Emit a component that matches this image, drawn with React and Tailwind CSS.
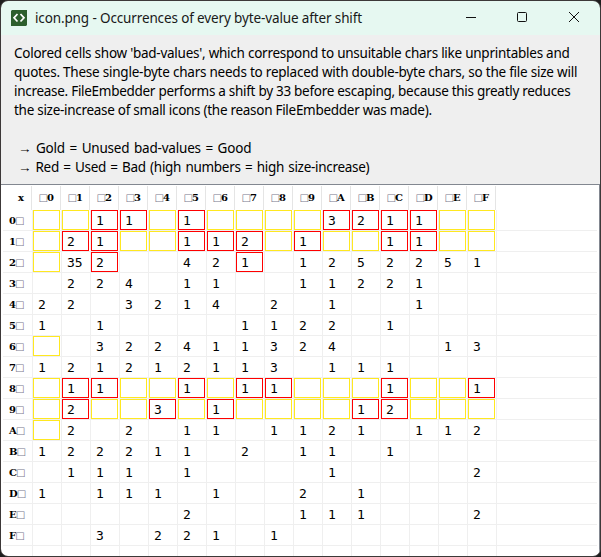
import React from "react";

const HEX = "0123456789ABCDEF".split("");

// One string per high nibble, one entry per low nibble; "." is an unused value.
const COUNTS = [
  ". . 1 1 . 1 . . . . 3 2 1 1 . .",
  ". 2 1 . . 1 1 2 . 1 . . 1 1 . .",
  ". 35 2 . . 4 2 1 . 1 2 5 2 2 5 1",
  ". 2 2 4 . 1 1 . . 1 1 2 2 1 . .",
  "2 2 . 3 2 1 4 . 2 . 1 . . 1 . .",
  "1 . 1 . . . . 1 1 2 2 . 1 . . .",
  ". . 3 2 2 4 1 1 3 2 4 . . . 1 3",
  "1 2 1 2 1 2 1 1 3 . 1 1 1 . . .",
  ". 1 1 . . 1 . 1 1 . . . 1 . . 1",
  ". 2 . . 3 . 1 . . . . 1 2 . . .",
  ". 2 . 2 . 1 1 . 1 1 2 1 . 1 1 2",
  "1 2 2 2 1 1 . 2 . 1 1 . 1 . . .",
  ". 1 1 1 . 1 . . . . 1 . . . . 2",
  "1 . 1 1 1 . 1 . . 2 . 1 . . . .",
  ". . . . . 2 . . . 1 1 1 . . . 2",
  ". . 3 . 2 2 1 . 1 . . . . . . .",
].map((row) => row.split(" ").map((v) => (v === "." ? "" : v)));

const isBad = (v) =>
  v <= 0x20 || v === 0x22 || v === 0x27 || v === 0x60 || (v >= 0x80 && v <= 0xa0);

function Box() {
  return (
    <span className="inline-flex w-2 justify-center font-['DejaVu_Sans'] text-[10px] font-normal text-[#77778c]">
      □
    </span>
  );
}

function TitleBar() {
  return (
    <header className="flex h-[34px] shrink-0 items-center bg-[#e6f8f1] pl-[10px]">
      <svg width="16" height="16" viewBox="0 0 16 16" className="mb-px shrink-0">
        <path d="M1 0H16V15L15 16H0V1Z" fill="#2d5f2d" />
        <path d="M6.5 4L3 7.8L6.5 11.5M9.5 4L13 7.8L9.5 11.5" fill="none" stroke="#fff" strokeWidth="1.7" />
      </svg>
      <h1 className="ml-2 whitespace-nowrap font-['Noto_Sans',sans-serif] text-[13.5px] leading-[18px] tracking-[-0.13px] text-[#191919]">
        icon.png - Occurrences of every byte-value after shift
      </h1>
      <div className="ml-auto flex h-full items-center">
        <svg width="134" height="34" viewBox="466 1 134 34" fill="none" stroke="#111">
          <path d="M466 17.5H476" />
          <rect x="517.5" y="12.5" width="9" height="9" rx="1" />
          <path d="M569 12L579 22M579 12L569 22" />
        </svg>
      </div>
    </header>
  );
}

function Description() {
  return (
    <section className="h-[149px] shrink-0 whitespace-nowrap bg-[#efefef] pl-[13px] pt-[9px] font-['Noto_Sans',sans-serif] text-[13.5px] leading-[19px] text-black">
      <p className="tracking-[-0.253px]">Colored cells show 'bad-values', which correspond to unsuitable chars like unprintables and</p>
      <p className="tracking-[-0.23px]">quotes. These single-byte chars needs to replaced with double-byte chars, so the file size will</p>
      <p className="tracking-[-0.285px]">increase. FileEmbedder performs a shift by 33 before escaping, because this greatly reduces</p>
      <p className="tracking-[-0.285px]">the size-increase of small icons (the reason FileEmbedder was made).</p>
      <p className="mt-[19px] pl-[4px] tracking-[-0.2px] [word-spacing:1.3px]">→ Gold = Unused bad-values = Good</p>
      <p className="pl-[4px] tracking-[-0.3px] [word-spacing:1.1px]">→ Red = Used = Bad (high numbers = high size-increase)</p>
    </section>
  );
}

function Cell({ value, count }) {
  const frame = !isBad(value)
    ? "border-transparent"
    : count
      ? "border-[#ff0000]"
      : "border-[#ffe820]";
  return (
    <div className="h-[21px] w-[29px] shrink-0 border-b border-r border-[#efefef]">
      <div className={`h-5 w-[27px] border pl-[4px] text-[13px] leading-[20px] ${frame}`}>{count}</div>
    </div>
  );
}

function Grid() {
  return (
    <main className="flex min-h-0 flex-1 flex-col border-r border-t border-[#828790] bg-white pl-[2px] pr-[2px]">
      <div className="flex h-[25px] shrink-0 pt-px font-['DejaVu_Serif',serif] text-[10px] font-bold leading-[24px] tracking-[-0.4px] text-black">
        <div className="w-[29px] border-r border-[#e5e5e5] pl-[15px]">x</div>
        {HEX.map((h) => (
          <div key={h} className="flex w-[29px] border-r border-[#e5e5e5] pl-[7px]">
            <Box />
            {h}
          </div>
        ))}
      </div>
      {COUNTS.map((row, r) => (
        <div key={r} className="flex h-[21px] shrink-0 font-['DejaVu_Sans_Mono',monospace] text-black">
          <div className="flex w-[30px] shrink-0 border-b border-r border-[#efefef] pl-[6px] font-['DejaVu_Serif',serif] text-[10px] font-bold leading-[21px] tracking-[-0.4px]">
            {HEX[r]}
            <Box />
          </div>
          {row.map((count, c) => (
            <Cell key={c} value={r * 16 + c} count={count} />
          ))}
          <div className="flex-1 border-b border-[#efefef]" />
        </div>
      ))}
      <div className="flex flex-1">
        <div className="w-[30px] border-r border-[#efefef]" />
        {HEX.map((h) => (
          <div key={h} className="w-[29px] border-r border-[#efefef]" />
        ))}
      </div>
    </main>
  );
}

export default function App() {
  return (
    <div className="h-[557px] w-[601px] bg-[#1e1e1e]">
      <div className="flex h-full w-full flex-col overflow-hidden rounded-[8px] border border-[#3c3838]">
        <TitleBar />
        <Description />
        <Grid />
      </div>
    </div>
  );
}
